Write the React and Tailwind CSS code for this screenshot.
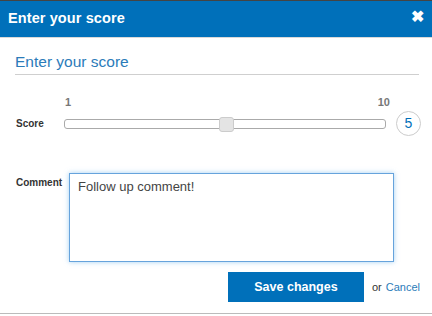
import { useState } from 'react';

export default function App() {
  const [score, setScore] = useState(5);
  const [comment, setComment] = useState('Follow up comment!');

  return (
    <div className="w-[432px] h-[316px] bg-[#444] flex flex-col" style={{ fontFamily: '"Liberation Sans", Arial, sans-serif' }}>
      <div className="mt-px flex-1 flex flex-col bg-white">
        {/* Header */}
        <div className="h-[37px] shrink-0 bg-[#0070ba] border-b border-[#d9d9d9] flex items-center justify-between pl-[8px] pr-[8px]">
          <h1 className="text-white font-bold text-[14.5px] tracking-[0.1px]">Enter your score</h1>
          <span className="text-white font-bold text-[16px] leading-none mt-[-4px]">✖</span>
        </div>

        <div className="flex-1 flex flex-col px-[15px] pt-[14px]">
          <h2 className="text-[#2b7bb9] text-[15.5px] leading-[20px] pb-[2px] border-b border-[#cfcfcf] mr-[-2px]">Enter your score</h2>

          {/* Score */}
          <div className="flex items-end mt-[22px] text-[11px] leading-[11px] font-bold text-[#777] pl-[50px] pr-[27px]">
            <span>1</span>
            <span className="ml-auto">10</span>
          </div>
          <div className="flex items-center mt-[3px]">
            <span className="w-[49px] shrink-0 text-[10px] font-bold text-[#333] pl-[1px]">Score</span>
            <div className="relative w-[322px] shrink-0 h-[10px] border border-[#aaa] rounded-[3px] bg-white">
              <div className="absolute top-[-3px] left-[154px] w-[15px] h-[15px] bg-[#e4e4e4] border border-[#ccc] rounded-[3px]" />
            </div>
            <div className="ml-[10px] shrink-0 w-[25px] h-[25px] rounded-full border border-[#ccc] flex items-center justify-center text-[#0070ba] text-[14px]">
              {score}
            </div>
          </div>

          {/* Comment */}
          <div className="flex items-start mt-[37px]">
            <span className="w-[54px] shrink-0 text-[10px] font-bold text-[#333] pt-[2px] pl-[1px]">Comment</span>
            <textarea
              value={comment}
              onChange={(e) => setComment(e.target.value)}
              className="w-[325px] h-[89px] shrink-0 border border-[#66a3dc] shadow-[0_0_5px_rgba(102,175,233,0.6)] px-[8px] py-[4px] text-[13px] leading-[18px] text-[#444] resize-none outline-none"
              style={{ fontFamily: '"Liberation Sans", Arial, sans-serif' }}
            />
          </div>

          {/* Actions */}
          <div className="flex items-center justify-end mt-[10px] mr-[-3px]">
            <button className="w-[136px] h-[30px] bg-[#0070ba] text-white font-bold text-[12.5px]">Save changes</button>
            <span className="ml-[8px] text-[11px] text-[#333]">or</span>
            <a className="ml-[4px] text-[11px] text-[#2b7bb9]">Cancel</a>
          </div>
        </div>
        <div className="h-px bg-[#bbb] mb-[2px]" />
      </div>
    </div>
  );
}
